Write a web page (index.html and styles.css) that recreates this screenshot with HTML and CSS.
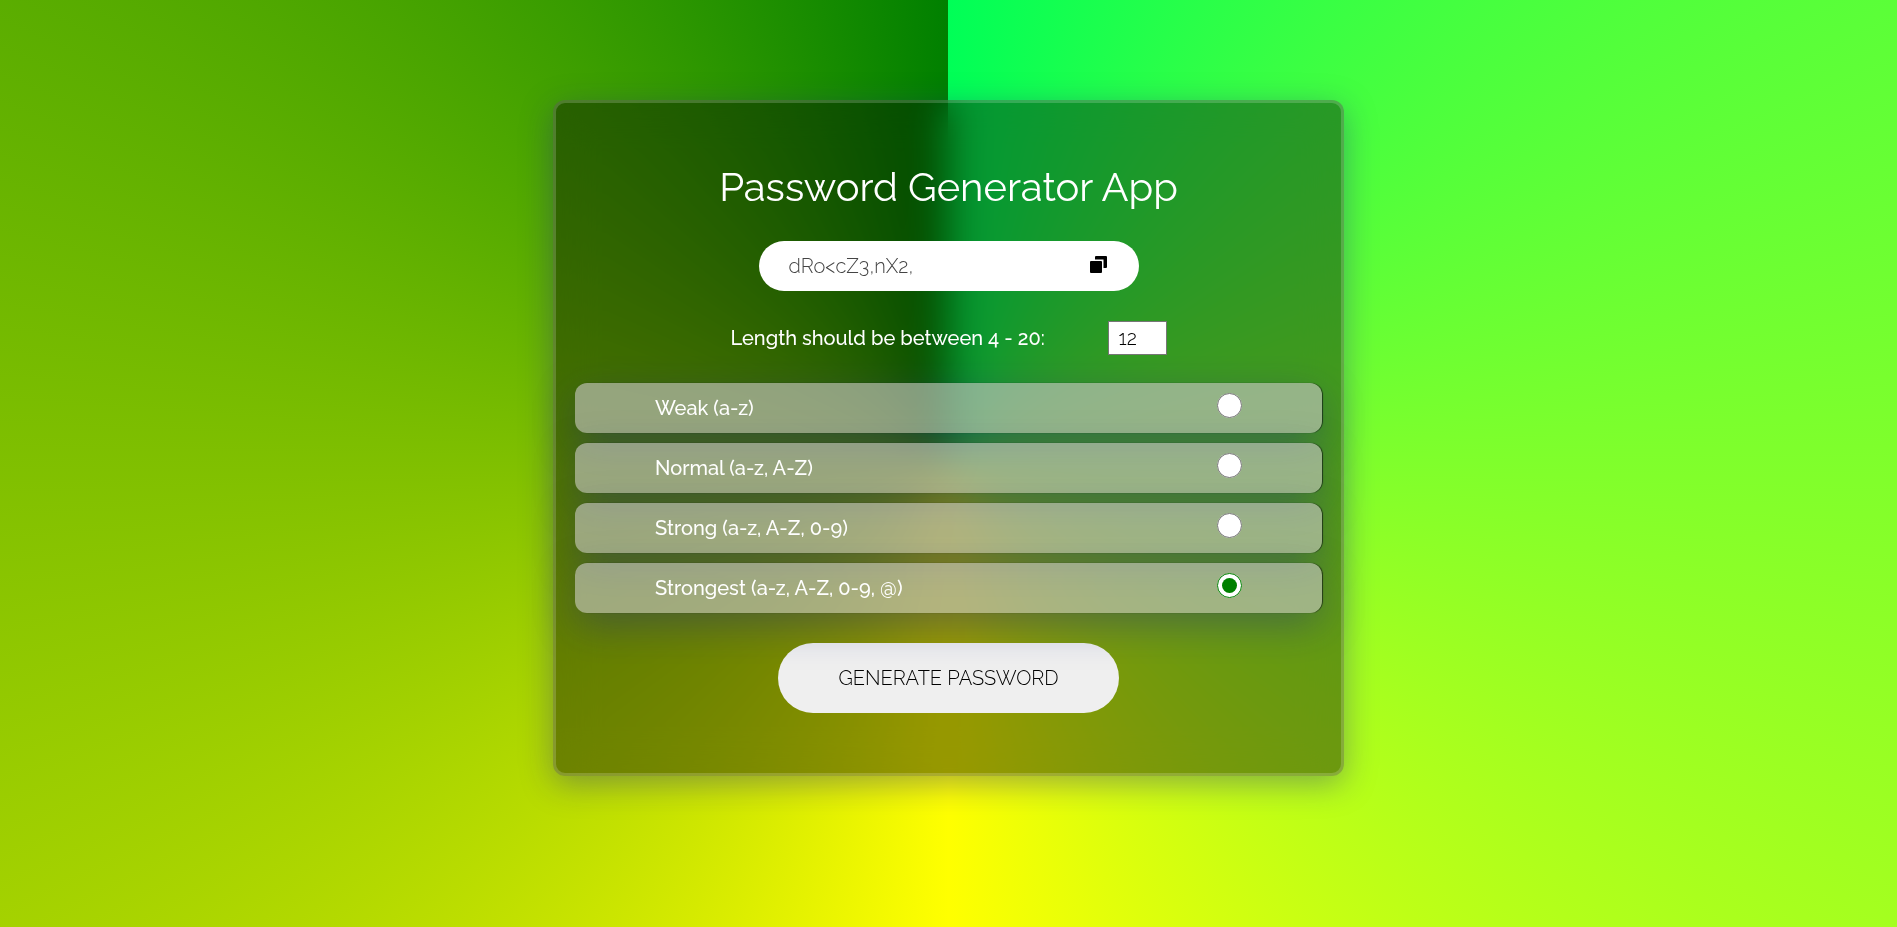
FILE: index.html
```html
<!DOCTYPE html>
<html lang="en">
<head>
<meta charset="utf-8">
<meta name="viewport" content="width=device-width, initial-scale=1">
<title>Password Generator App</title>
<link rel="stylesheet" href="styles.css">
</head>
<body>
<main class="page">
  <form class="card">
    <h1 class="title">Password Generator App</h1>
    <div class="result">
      <input class="result-text" type="text" value="dRo&lt;cZ3,nX2," aria-label="Generated password" readonly>
      <button class="copy" type="button" aria-label="Copy password">
        <svg class="copy-icon" viewBox="0 0 17 17" aria-hidden="true">
          <path d="M6 0h10q1 0 1 1v10q0 1-1 1h-2.500V3.500H5V1q0-1 1-1z"/>
          <rect x="0" y="5" width="12" height="12" rx="1"/>
        </svg>
      </button>
    </div>
    <div class="length">
      <label for="length">Length should be between 4 - 20:</label>
      <input class="length-input" id="length" type="text" inputmode="numeric" value="12">
    </div>
    <div class="options">
      <div class="option"><label for="weak">Weak (a-z)</label><input class="radio" type="radio" name="strength" id="weak"></div>
      <div class="option"><label for="normal">Normal (a-z, A-Z)</label><input class="radio" type="radio" name="strength" id="normal"></div>
      <div class="option"><label for="strong">Strong (a-z, A-Z, 0-9)</label><input class="radio" type="radio" name="strength" id="strong"></div>
      <div class="option"><label for="strongest">Strongest (a-z, A-Z, 0-9, @)</label><input class="radio" type="radio" name="strength" id="strongest" checked></div>
    </div>
    <button class="generate" type="button">Generate Password</button>
  </form>
</main>
</body>
</html>
```

FILE: styles.css
```css
* { box-sizing: border-box; }

body {
  margin: 0;
  font-family: Raleway, Lato, sans-serif;
  font-size: 20px;
  font-weight: 500;
  color: #fff;
}

.page {
  display: flex;
  justify-content: center;
  align-items: flex-start;
  min-height: 100vh;
  padding: 100px 16px 32px;
  background: conic-gradient(#00ff57, yellow, green);
}

.card {
  display: flex;
  flex-direction: column;
  align-items: center;
  width: 100%;
  max-width: 791px;
  padding: 60px 19px;
  border: 3px solid rgba(255, 255, 255, 0.18);
  border-radius: 12px;
  background: rgba(0, 0, 0, 0.4);
  box-shadow: 0 8px 32px rgba(31, 38, 135, 0.37);
  backdrop-filter: blur(20px);
}

.title {
  margin: 0 0 30px;
  font-size: 40px;
  font-weight: 400;
  line-height: 48px;
}

.result {
  display: flex;
  align-items: center;
  justify-content: space-between;
  width: 100%;
  max-width: 380px;
  height: 50px;
  margin-bottom: 30px;
  padding: 0 32px 0 30px;
  border-radius: 25px;
  background: #fff;
}

.result-text {
  flex: 1;
  min-width: 0;
  padding: 0;
  border: 0;
  background: none;
  color: #444;
  font: inherit;
  font-weight: 300;
}

.copy {
  padding: 0 0 4px;
  border: 0;
  background: none;
  line-height: 0;
}

.copy-icon {
  width: 17px;
  height: 17px;
}

.length {
  display: flex;
  align-items: center;
  justify-content: space-between;
  width: 100%;
  max-width: 436px;
  margin-bottom: 28px;
}

.length-input {
  width: 59px;
  height: 34px;
  padding: 0 10px;
  border: 1px solid #767676;
  background: #fff;
  color: #000;
  font: inherit;
  font-weight: 300;
}

.options {
  display: flex;
  flex-direction: column;
  gap: 10px;
  width: 100%;
  margin-bottom: 30px;
}

/* Positioned so that each row's shadow falls over what comes before it and over the button. */
.option {
  position: relative;
  display: flex;
  align-items: center;
  justify-content: space-between;
  height: 50px;
  padding: 0 80px;
  border-radius: 12px;
  background: rgba(196, 196, 196, 0.64);
  box-shadow: 0 12px 40px rgba(31, 38, 135, 0.37), 1px 0 1px rgba(0, 0, 0, 0.6);
}

.radio {
  width: 25px;
  height: 25px;
  margin: 0 0 5px;
  accent-color: green;
}

.generate {
  height: 70px;
  padding: 0 60px;
  border: 0;
  border-radius: 35px;
  background: #efefef;
  color: #000;
  font: inherit;
  font-weight: 300;
  text-transform: uppercase;
}
```
